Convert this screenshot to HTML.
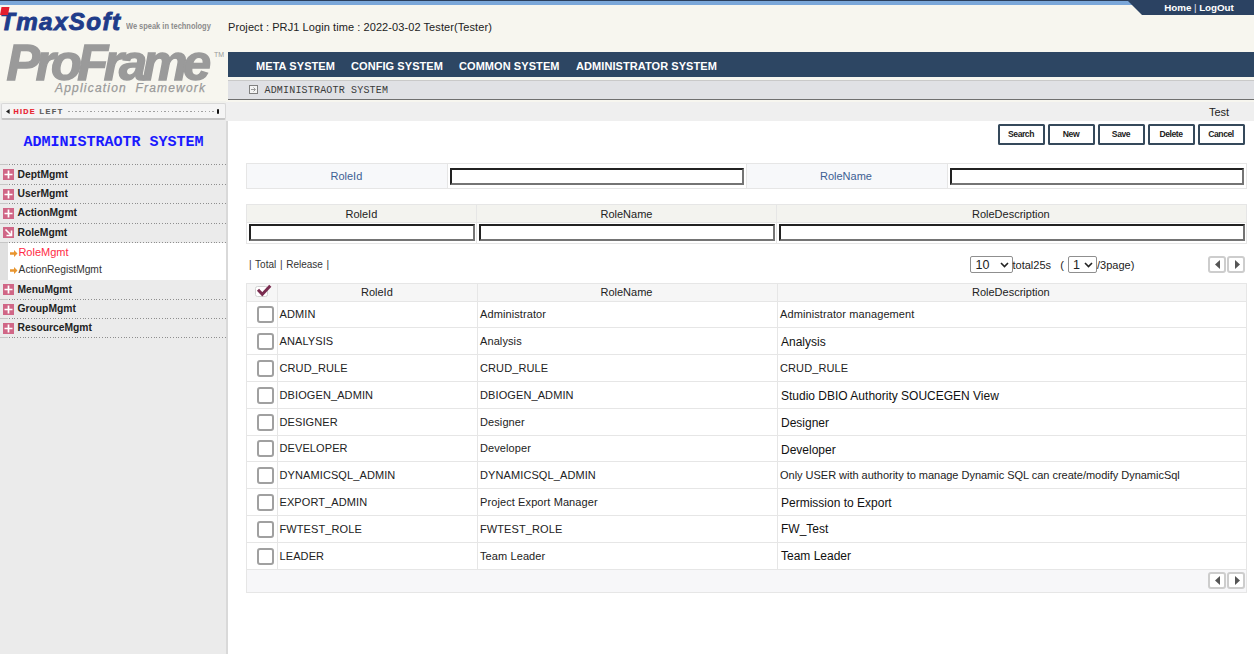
<!DOCTYPE html>
<html><head><meta charset="utf-8">
<style>
*{margin:0;padding:0;box-sizing:border-box}
html,body{width:1254px;height:654px;overflow:hidden;background:#fff;font-family:"Liberation Sans",sans-serif;font-size:12px;color:#222}
.a{position:absolute;white-space:nowrap;line-height:1}
#topline{left:0;top:0;width:1254px;height:1px;background:#2b3f5c}
#topblue{left:0;top:1px;width:1254px;height:4px;background:#7ba7d9}
#hdr{left:0;top:5px;width:1254px;height:97px;background:#f7f6ef}
#hdr2{left:0;top:101px;width:226px;height:2px;background:#f1f1ec}
#tab{left:1127px;top:0;width:127px;height:15px}
#sidebar{left:0;top:103px;width:226px;height:551px;background:#ebebeb}
#sbline{left:226px;top:120px;width:2px;height:534px;background:#d9d9d9}
#nav{left:228px;top:52px;width:1026px;height:25px;background:#2d4663}
#sub{left:228px;top:80px;width:1026px;height:20px;background:#e0e1e5;border-top:1px solid #c9c9c9;border-bottom:1px solid #6f6f6f}
#testbar{left:226px;top:102px;width:1028px;height:19px;background:#efefef}
#content{left:228px;top:121px;width:1026px;height:533px;background:#fff}
.nav{color:#fff;font-weight:bold;font-size:11px;top:60.8px;letter-spacing:0.07px}
.btn{top:124px;width:47px;height:21px;border:2px solid #35495b;border-radius:1.5px;background:#fff;font-size:8.6px;font-weight:bold;color:#222;text-align:center;line-height:16.5px;letter-spacing:-0.45px}
.tbl{border:1px solid #e3e3e3}
.inp{position:absolute;background:#fff;border-top:2px solid #222;border-left:2px solid #222;border-bottom:2px solid #747474;border-right:2px solid #747474}
.hl{position:absolute;background:#e6e6e6}
.vl{position:absolute;background:#e6e6e6}
.sel{border:1px solid #8f8f8f;border-radius:2px;background:#fff}
.arr{width:18px;height:17px;border:2px solid #cdcdcd;border-radius:3px;background:#fff}
.cb{position:absolute;width:17px;height:17px;border:2px solid #a0a0a0;border-radius:3px;background:#fff}
.rt{font-size:11px;color:#222;letter-spacing:0.1px}
.dt{font-size:12px;color:#111}
.menu{left:0;width:226px;height:20px;border-bottom:1px dotted #9a9a9a}
.mico{position:absolute;left:2px;width:11px;height:11px;background:#d0607a}
.dl{left:0;width:226px;height:1px;background-image:linear-gradient(90deg,#c8c8c8 0 8px,transparent 8px),repeating-linear-gradient(90deg,#8c8c8c 0 1.2px,transparent 1.2px 2.7px);background-size:226px 1px,217px 1px;background-position:0 0,9px 0;background-repeat:no-repeat}
.mt{font-size:10.3px;font-weight:bold;color:#222}
</style></head><body>
<div class="a" id="hdr"></div>
<div class="a" id="topline"></div>
<div class="a" id="topblue"></div>
<svg class="a" id="tab" width="127" height="15"><polygon points="0,0 127,0 127,15 15,15" fill="#2b4262"/></svg>
<div class="a" style="left:1164.3px;top:3px;font-size:9.8px;font-weight:bold;color:#fff;letter-spacing:-0.05px">Home <span style="font-weight:normal;color:#e8e0f0">|</span> LogOut</div>

<!-- TmaxSoft logo -->
<div class="a" style="left:0px;top:10.4px;font-size:24.2px;font-weight:bold;font-style:italic;color:#1f3c8a;letter-spacing:1.4px;-webkit-text-stroke:0.9px #1f3c8a">TmaxSoft</div>
<svg class="a" style="left:0;top:7px" width="10" height="8"><polygon points="1.5,0 9.5,0 8,8 0,8" fill="#e41e2d"/></svg>
<div class="a" style="left:126px;top:20.7px;font-size:9.5px;font-weight:bold;color:#8c8c8c;transform:scaleX(0.785);transform-origin:left">We speak in technology</div>
<div class="a" style="left:228px;top:22px;font-size:11px;color:#222;letter-spacing:0.08px">Project : PRJ1 Login time : 2022-03-02 Tester(Tester)</div>

<!-- ProFrame logo -->
<div class="a" style="left:6.5px;top:38.3px;font-size:50.5px;font-weight:bold;font-style:italic;color:#9a9a9a;letter-spacing:-4.45px;-webkit-text-stroke:1.4px #9a9a9a">ProFrame</div>
<div class="a" style="left:214px;top:51px;font-size:7px;color:#9a9a9a">TM</div>
<div class="a" style="left:55px;top:81.8px;font-size:12px;font-style:italic;color:#9a9a9a;letter-spacing:1.2px;word-spacing:4px;-webkit-text-stroke:0.25px #9a9a9a">Application Framework</div>

<div class="a" id="hdr2"></div>
<div class="a" id="sidebar"></div>
<div class="a" id="content"></div>
<div class="a" id="sbline"></div>
<div class="a" id="nav"></div>
<div class="a nav" style="left:256px">META SYSTEM</div>
<div class="a nav" style="left:351px">CONFIG SYSTEM</div>
<div class="a nav" style="left:459px">COMMON SYSTEM</div>
<div class="a nav" style="left:576px">ADMINISTRATOR SYSTEM</div>
<div class="a" id="sub"></div>
<svg class="a" style="left:249px;top:84.5px" width="10" height="10"><rect x="0.5" y="0.5" width="8" height="8" fill="#f4f4f4" stroke="#808080"/><path d="M2 4.5h4M4.5 2.5l2 2-2 2" stroke="#999" fill="none"/></svg>
<div class="a" style="left:264.5px;top:86px;font-family:'Liberation Mono',monospace;font-size:10px;color:#3a3a3a;letter-spacing:0.18px">ADMINISTRAOTR SYSTEM</div>
<div class="a" id="testbar"></div>
<div class="a" style="left:1209px;top:106.5px;font-size:11px;color:#222">Test</div>

<!-- HIDE LEFT -->
<div class="a" style="left:1px;top:103px;width:225px;height:17px;background:#f4f4f4;border:1px solid #d8d8d8;border-bottom:2px solid #c6c6c6;border-radius:2px"></div>
<svg class="a" style="left:6px;top:109px" width="4" height="5"><polygon points="3.6,0 3.6,5 0,2.5" fill="#222"/></svg>
<div class="a" style="left:13.6px;top:108.2px;font-size:7.2px;font-weight:bold;color:#e8202e;letter-spacing:1.25px;-webkit-text-stroke:0.2px #e8202e">HIDE</div>
<div class="a" style="left:39.5px;top:108.2px;font-size:7.2px;font-weight:bold;color:#5a5a5a;letter-spacing:1.55px;-webkit-text-stroke:0.2px #5a5a5a">LEFT</div>
<div class="a" style="left:68px;top:111px;width:148px;height:1px;background:repeating-linear-gradient(90deg,#a0a0a0 0 1.5px,transparent 1.5px 3.7px)"></div>
<div class="a" style="left:216.5px;top:108.5px;width:2px;height:5px;background:#111;border-radius:1px"></div>

<!-- sidebar title -->
<div class="a" style="left:23.5px;top:135px;font-family:'Liberation Mono',monospace;font-size:15px;font-weight:bold;color:#1a1aff">ADMINISTRAOTR SYSTEM</div>


<!-- sidebar menu -->
<svg width="0" height="0" style="position:absolute"><defs><g id="dots"><path d="M0 0.5h8" stroke="#c6c6c6"/><path d="M9 0.5h1M12 0.5h1M14 0.5h1M17 0.5h1M20 0.5h1M23 0.5h1M25 0.5h1M28 0.5h1M31 0.5h1M34 0.5h1M36 0.5h1M39 0.5h1M42 0.5h1M44 0.5h1M47 0.5h1M50 0.5h1M53 0.5h1M55 0.5h1M58 0.5h1M61 0.5h1M64 0.5h1M66 0.5h1M69 0.5h1M72 0.5h1M75 0.5h1M77 0.5h1M80 0.5h1M83 0.5h1M85 0.5h1M88 0.5h1M91 0.5h1M94 0.5h1M96 0.5h1M99 0.5h1M102 0.5h1M105 0.5h1M107 0.5h1M110 0.5h1M113 0.5h1M115 0.5h1M118 0.5h1M121 0.5h1M124 0.5h1M126 0.5h1M129 0.5h1M132 0.5h1M135 0.5h1M137 0.5h1M140 0.5h1M143 0.5h1M146 0.5h1M148 0.5h1M151 0.5h1M154 0.5h1M156 0.5h1M159 0.5h1M162 0.5h1M165 0.5h1M167 0.5h1M170 0.5h1M173 0.5h1M176 0.5h1M178 0.5h1M181 0.5h1M184 0.5h1M186 0.5h1M189 0.5h1M192 0.5h1M195 0.5h1M197 0.5h1M200 0.5h1M203 0.5h1M206 0.5h1M208 0.5h1M211 0.5h1M214 0.5h1M216 0.5h1M219 0.5h1M222 0.5h1M225 0.5h1" stroke="#8e8e8e"/></g></defs></svg>
<svg class="a" style="left:0;top:164px" width="226" height="1"><use href="#dots"/></svg>
<svg class="a" style="left:0;top:184px" width="226" height="1"><use href="#dots"/></svg>
<svg class="a" style="left:0;top:203px" width="226" height="1"><use href="#dots"/></svg>
<svg class="a" style="left:0;top:223px" width="226" height="1"><use href="#dots"/></svg>
<svg class="a" style="left:0;top:242px" width="226" height="1"><use href="#dots"/></svg>
<svg class="a" style="left:0;top:299px" width="226" height="1"><use href="#dots"/></svg>
<svg class="a" style="left:0;top:318px" width="226" height="1"><use href="#dots"/></svg>
<svg class="a" style="left:0;top:337px" width="226" height="1"><use href="#dots"/></svg>
<div class="a" style="left:0;top:243px;width:8px;height:37px;background:#e0e0e0"></div>
<div class="a" style="left:8px;top:243px;width:218px;height:37px;background:#fff"></div>
<svg class="a" style="left:3px;top:169px" width="11" height="11"><rect width="11" height="11" fill="#d06686"/><path d="M1.5 5.5h8M5.5 1.5v8" stroke="#fff" stroke-width="1.7"/></svg>
<svg class="a" style="left:3px;top:188.5px" width="11" height="11"><rect width="11" height="11" fill="#d06686"/><path d="M1.5 5.5h8M5.5 1.5v8" stroke="#fff" stroke-width="1.7"/></svg>
<svg class="a" style="left:3px;top:208px" width="11" height="11"><rect width="11" height="11" fill="#d06686"/><path d="M1.5 5.5h8M5.5 1.5v8" stroke="#fff" stroke-width="1.7"/></svg>
<svg class="a" style="left:3px;top:227px" width="11" height="11"><rect width="11" height="11" fill="#d06686"/><path d="M2.5 2.5l5.5 5.5M8.5 3.5v5h-5" stroke="#fff" stroke-width="1.6" fill="none"/></svg>
<svg class="a" style="left:3px;top:284px" width="11" height="11"><rect width="11" height="11" fill="#d06686"/><path d="M1.5 5.5h8M5.5 1.5v8" stroke="#fff" stroke-width="1.7"/></svg>
<svg class="a" style="left:3px;top:303.5px" width="11" height="11"><rect width="11" height="11" fill="#d06686"/><path d="M1.5 5.5h8M5.5 1.5v8" stroke="#fff" stroke-width="1.7"/></svg>
<svg class="a" style="left:3px;top:323px" width="11" height="11"><rect width="11" height="11" fill="#d06686"/><path d="M1.5 5.5h8M5.5 1.5v8" stroke="#fff" stroke-width="1.7"/></svg>
<div class="a mt" style="left:17.5px;top:169.5px">DeptMgmt</div>
<div class="a mt" style="left:17.5px;top:189px">UserMgmt</div>
<div class="a mt" style="left:17.5px;top:208.3px">ActionMgmt</div>
<div class="a mt" style="left:17.5px;top:227.8px">RoleMgmt</div>
<div class="a mt" style="left:17.5px;top:284.7px">MenuMgmt</div>
<div class="a mt" style="left:17.5px;top:304px">GroupMgmt</div>
<div class="a mt" style="left:17.5px;top:323.2px">ResourceMgmt</div>
<svg class="a" style="left:10px;top:249.5px" width="8" height="7"><path d="M0 2.3h4V0l3.5 3.5L4 7V4.7H0z" fill="#e8952f"/></svg>
<svg class="a" style="left:10px;top:267px" width="8" height="7"><path d="M0 2.3h4V0l3.5 3.5L4 7V4.7H0z" fill="#e8952f"/></svg>
<div class="a" style="left:18.4px;top:247.3px;font-size:11px;color:#ff2a45">RoleMgmt</div>
<div class="a" style="left:18.6px;top:265.3px;font-size:10.25px;color:#333">ActionRegistMgmt</div>

<!-- buttons -->
<div class="a btn" style="left:997.5px">Search</div>
<div class="a btn" style="left:1047.5px">New</div>
<div class="a btn" style="left:1097.5px">Save</div>
<div class="a btn" style="left:1147.5px">Delete</div>
<div class="a btn" style="left:1197.5px">Cancel</div>

<!-- search form -->
<div class="a" style="left:246px;top:163px;width:1001px;height:26px;border:1px solid #e6e6e6;background:#fff"></div>
<div class="a" style="left:247px;top:164px;width:200px;height:24px;background:#f7f8fa"></div>
<div class="a" style="left:747px;top:164px;width:200px;height:24px;background:#f7f8fa"></div>
<div class="a vl" style="left:447px;top:164px;width:1px;height:24px"></div>
<div class="a vl" style="left:746px;top:164px;width:1px;height:24px"></div>
<div class="a vl" style="left:947px;top:164px;width:1px;height:24px"></div>
<div class="a" style="left:330.5px;top:171.2px;font-size:11px;color:#3d5f94">RoleId</div>
<div class="a" style="left:820px;top:171.2px;font-size:11px;color:#3d5f94">RoleName</div>
<div class="inp" style="left:450px;top:167.5px;width:294px;height:17px"></div>
<div class="inp" style="left:950px;top:167.5px;width:294px;height:17px"></div>

<!-- filter table -->
<div class="a" style="left:246px;top:204px;width:1001px;height:40px;border:1px solid #e6e6e6;background:#fff"></div>
<div class="a" style="left:247px;top:205px;width:999px;height:17px;background:#f3f3ef"></div>
<div class="a hl" style="left:247px;top:222px;width:999px;height:1px"></div>
<div class="a vl" style="left:476px;top:205px;width:1px;height:38px"></div>
<div class="a vl" style="left:776px;top:205px;width:1px;height:38px"></div>
<div class="a" style="left:345.5px;top:208.7px;font-size:11px;color:#222">RoleId</div>
<div class="a" style="left:600.5px;top:208.7px;font-size:11px;color:#222">RoleName</div>
<div class="a" style="left:972px;top:208.7px;font-size:11px;color:#222">RoleDescription</div>
<div class="inp" style="left:248.5px;top:224px;width:226px;height:17px"></div>
<div class="inp" style="left:479px;top:224px;width:296px;height:17px"></div>
<div class="inp" style="left:779px;top:224px;width:466px;height:17px"></div>

<!-- list info -->
<div class="a" style="left:249px;top:260px;font-size:10px;color:#333;word-spacing:0.9px">| Total | Release |</div>
<div class="a sel" style="left:969.5px;top:255.5px;width:43px;height:17px"><span style="position:absolute;left:5px;top:1px;font-size:12.5px;line-height:14px;color:#222">10</span><svg style="position:absolute;left:29px;top:5px" width="9" height="6"><path d="M1 1l3.5 3.5L8 1" stroke="#222" stroke-width="1.6" fill="none"/></svg></div>
<div class="a" style="left:1012.5px;top:259.5px;font-size:11px;color:#222">total25s&nbsp;&nbsp; (</div>
<div class="a sel" style="left:1068px;top:255.5px;width:28.5px;height:17px"><span style="position:absolute;left:4px;top:1px;font-size:12.5px;line-height:14px;color:#222">1</span><svg style="position:absolute;left:15px;top:5px" width="9" height="6"><path d="M1 1l3.5 3.5L8 1" stroke="#222" stroke-width="1.6" fill="none"/></svg></div>
<div class="a" style="left:1097px;top:259.5px;font-size:11px;color:#222">/3page)</div>
<div class="a arr" style="left:1207.5px;top:256px"><svg width="14" height="13" style="position:absolute;left:1px;top:0"><polygon points="4,6.5 9,2 9,11" fill="#555"/></svg></div>
<div class="a arr" style="left:1226.5px;top:256px"><svg width="14" height="13" style="position:absolute;left:1px;top:0"><polygon points="5,2 10,6.5 5,11" fill="#555"/></svg></div>

<!-- grid -->
<div class="a" style="left:246px;top:283px;width:1001px;height:310px;border:1px solid #e6e6e6;background:#fff"></div>
<div class="a" style="left:247px;top:284px;width:999px;height:17px;background:#f6f6f6"></div>
<div class="a" style="left:247px;top:570px;width:999px;height:22px;background:#f7f7f9"></div>
<div class="a hl" style="left:247px;top:301px;width:999px;height:1px"></div>
<div class="a hl" style="left:247px;top:327px;width:999px;height:1px"></div>
<div class="a hl" style="left:247px;top:354px;width:999px;height:1px"></div>
<div class="a hl" style="left:247px;top:381px;width:999px;height:1px"></div>
<div class="a hl" style="left:247px;top:408px;width:999px;height:1px"></div>
<div class="a hl" style="left:247px;top:435px;width:999px;height:1px"></div>
<div class="a hl" style="left:247px;top:461px;width:999px;height:1px"></div>
<div class="a hl" style="left:247px;top:488px;width:999px;height:1px"></div>
<div class="a hl" style="left:247px;top:515px;width:999px;height:1px"></div>
<div class="a hl" style="left:247px;top:542px;width:999px;height:1px"></div>
<div class="a hl" style="left:247px;top:569px;width:999px;height:1px"></div>
<div class="a vl" style="left:276.5px;top:284px;width:1px;height:285px"></div>
<div class="a vl" style="left:477px;top:284px;width:1px;height:285px"></div>
<div class="a vl" style="left:777px;top:284px;width:1px;height:285px"></div>
<svg class="a" style="left:255px;top:284px" width="18" height="14"><rect x="0.5" y="2.5" width="12" height="10" rx="2" fill="#fff" stroke="#d2d2d2"/><path d="M3 5.8l4.3 4.5L15.3 1.8" stroke="#7a2d50" stroke-width="3" fill="none"/></svg>
<div class="a" style="left:361px;top:286.5px;font-size:11px;color:#222">RoleId</div>
<div class="a" style="left:600.5px;top:286.5px;font-size:11px;color:#222">RoleName</div>
<div class="a" style="left:972px;top:286.5px;font-size:11px;color:#222">RoleDescription</div>
<div class="cb" style="left:257px;top:306.0px"></div>
<div class="a rt" style="left:279.5px;top:309.2px">ADMIN</div>
<div class="a rt" style="left:480px;top:309.2px">Administrator</div>
<div class="a rt" style="left:780px;top:309.2px">Administrator management</div>
<div class="cb" style="left:257px;top:332.5px"></div>
<div class="a rt" style="left:279.5px;top:335.7px">ANALYSIS</div>
<div class="a rt" style="left:480px;top:335.7px">Analysis</div>
<div class="a dt" style="left:781px;top:336.1px">Analysis</div>
<div class="cb" style="left:257px;top:359.5px"></div>
<div class="a rt" style="left:279.5px;top:362.7px">CRUD_RULE</div>
<div class="a rt" style="left:480px;top:362.7px">CRUD_RULE</div>
<div class="a rt" style="left:780px;top:362.7px">CRUD_RULE</div>
<div class="cb" style="left:257px;top:386.5px"></div>
<div class="a rt" style="left:279.5px;top:389.7px">DBIOGEN_ADMIN</div>
<div class="a rt" style="left:480px;top:389.7px">DBIOGEN_ADMIN</div>
<div class="a dt" style="left:781px;top:390.1px">Studio DBIO Authority SOUCEGEN View</div>
<div class="cb" style="left:257px;top:413.5px"></div>
<div class="a rt" style="left:279.5px;top:416.7px">DESIGNER</div>
<div class="a rt" style="left:480px;top:416.7px">Designer</div>
<div class="a dt" style="left:781px;top:417.1px">Designer</div>
<div class="cb" style="left:257px;top:440.0px"></div>
<div class="a rt" style="left:279.5px;top:443.2px">DEVELOPER</div>
<div class="a rt" style="left:480px;top:443.2px">Developer</div>
<div class="a dt" style="left:781px;top:443.6px">Developer</div>
<div class="cb" style="left:257px;top:466.5px"></div>
<div class="a rt" style="left:279.5px;top:469.7px">DYNAMICSQL_ADMIN</div>
<div class="a rt" style="left:480px;top:469.7px">DYNAMICSQL_ADMIN</div>
<div class="a rt" style="left:780px;top:469.7px;letter-spacing:-0.02px">Only USER with authority to manage Dynamic SQL can create/modify DynamicSql</div>
<div class="cb" style="left:257px;top:493.5px"></div>
<div class="a rt" style="left:279.5px;top:496.7px">EXPORT_ADMIN</div>
<div class="a rt" style="left:480px;top:496.7px">Project Export Manager</div>
<div class="a dt" style="left:781px;top:497.1px">Permission to Export</div>
<div class="cb" style="left:257px;top:520.5px"></div>
<div class="a rt" style="left:279.5px;top:523.7px">FWTEST_ROLE</div>
<div class="a rt" style="left:480px;top:523.7px">FWTEST_ROLE</div>
<div class="a dt" style="left:781px;top:523.4px">FW_Test</div>
<div class="cb" style="left:257px;top:547.5px"></div>
<div class="a rt" style="left:279.5px;top:550.7px">LEADER</div>
<div class="a rt" style="left:480px;top:550.7px">Team Leader</div>
<div class="a dt" style="left:781px;top:549.9px">Team Leader</div>
<div class="a arr" style="left:1207.5px;top:572px"><svg width="14" height="13" style="position:absolute;left:1px;top:0"><polygon points="4,6.5 9,2 9,11" fill="#555"/></svg></div>
<div class="a arr" style="left:1226.5px;top:572px"><svg width="14" height="13" style="position:absolute;left:1px;top:0"><polygon points="5,2 10,6.5 5,11" fill="#555"/></svg></div>
</body></html>
